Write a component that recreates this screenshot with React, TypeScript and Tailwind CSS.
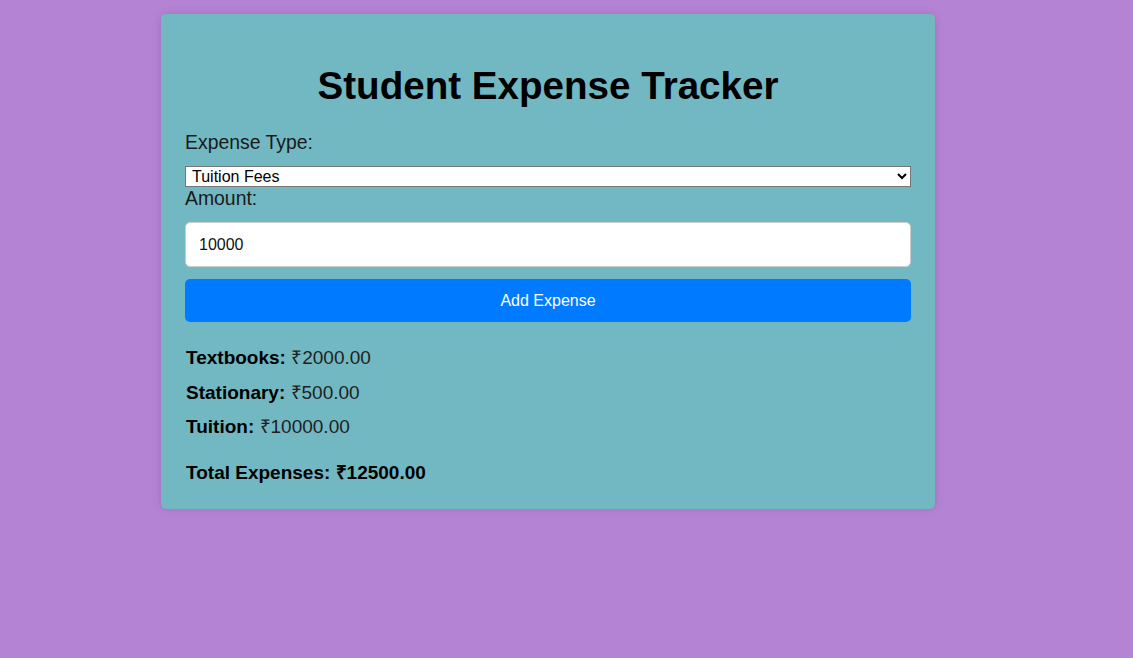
import React, { useState } from 'react';

const App = () => {
  const [type, setType] = useState('tuition');
  const [amount, setAmount] = useState('10000');

  const expenses = [
    { label: 'Textbooks:', value: '₹2000.00' },
    { label: 'Stationary:', value: '₹500.00' },
    { label: 'Tuition:', value: '₹10000.00' },
  ];

  return (
    <div className="min-h-screen bg-[#b583d4] pt-[14px] font-['Liberation_Sans',Arial,sans-serif]">
      <div className="ml-[161px] w-[774px] rounded-[5px] bg-[#72b8c2] px-6 pt-6 pb-[25px] shadow-[0_0_10px_rgba(0,0,0,0.12)]">
        <h1 className="mt-[26px] text-center text-[38.6px] leading-[44px] font-bold text-black">
          Student Expense Tracker
        </h1>

        <label className="mt-[23px] block text-[19.4px] leading-[22px] text-[#1a1a1a]">Expense Type:</label>
        <select
          value={type}
          onChange={(e) => setType(e.target.value)}
          className="mt-[13px] block h-[21px] w-full border border-[#767676] bg-white pl-[2px] text-[16px] text-black"
        >
          <option value="textbooks">Textbooks</option>
          <option value="stationary">Stationary</option>
          <option value="tuition">Tuition Fees</option>
        </select>

        <label className="block text-[19.4px] leading-[22px] text-[#1a1a1a]">Amount:</label>
        <input
          type="text"
          value={amount}
          onChange={(e) => setAmount(e.target.value)}
          className="mt-[13px] block h-[45px] w-full rounded-[5px] border border-[#cccccc] bg-white px-[13px] text-[16px] text-[#111]"
        />

        <button className="mt-[12px] block h-[43px] w-full rounded-[5px] bg-[#007bff] text-[16px] text-white">
          Add Expense
        </button>

        <div className="mt-[19px] pl-px">
          {expenses.map((item) => (
            <p key={item.label} className="text-[19px] leading-[34.5px] text-[#1f1f1f]">
              <strong className="text-black">{item.label}</strong> {item.value}
            </p>
          ))}
        </div>

        <p className="mt-[17px] pl-px text-[19px] leading-[22px] font-bold text-black">
          Total Expenses: ₹12500.00
        </p>
      </div>
    </div>
  );
};

export default App;
